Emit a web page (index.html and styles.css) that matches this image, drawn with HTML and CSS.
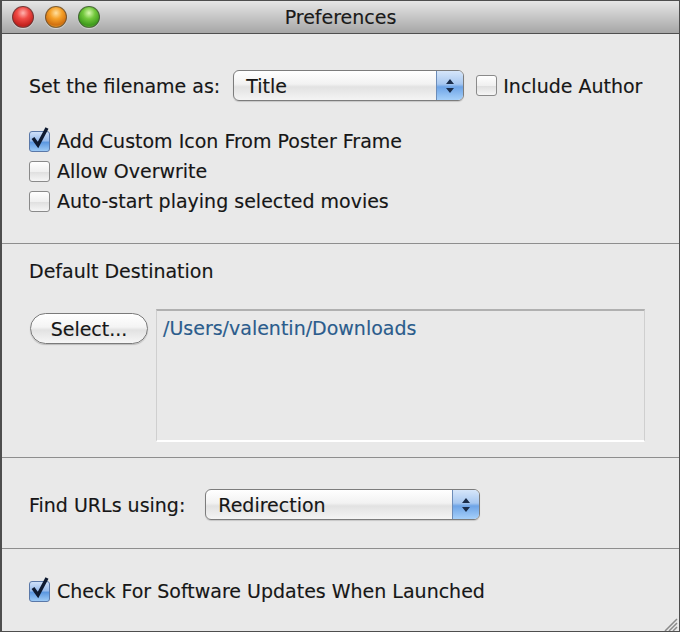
FILE: index.html
```html
<!DOCTYPE html>
<html>
<head>
<meta charset="utf-8">
<link rel="stylesheet" href="styles.css">
</head>
<body>
<div class="window">
  <div class="titlebar">
    <div class="lights">
      <span class="light red"></span>
      <span class="light orange"></span>
      <span class="light green"></span>
    </div>
    <div class="title">Preferences</div>
  </div>

  <div class="section s1">
    <div class="row name-row">
      <span class="label">Set the filename as:</span>
      <div class="popup popup-title">
        <span class="popup-text">Title</span>
        <span class="popup-arrows">
          <svg width="10" height="16" viewBox="0 0 10 16"><path d="M5 1 L9 6 L1 6 Z M5 15 L9 10 L1 10 Z" fill="#1b2d4a"/></svg>
        </span>
      </div>
      <label class="check">
        <span class="box"></span>
        <span>Include Author</span>
      </label>
    </div>
    <div class="checks">
      <label class="check">
        <span class="box checked"><svg width="22" height="24" viewBox="0 0 22 24"><path d="M4 12 L9 19 L18 2" fill="none" stroke="#0e1a30" stroke-width="3.4"/></svg></span>
        <span>Add Custom Icon From Poster Frame</span>
      </label>
      <label class="check">
        <span class="box"></span>
        <span>Allow Overwrite</span>
      </label>
      <label class="check">
        <span class="box"></span>
        <span>Auto-start playing selected movies</span>
      </label>
    </div>
  </div>

  <div class="section s2">
    <div class="label">Default Destination</div>
    <div class="dest">
      <div class="button">Select...</div>
      <div class="pathbox">/Users/valentin/Downloads</div>
    </div>
  </div>

  <div class="section s3">
    <div class="row">
      <span class="label">Find URLs using:</span>
      <div class="popup popup-redir">
        <span class="popup-text">Redirection</span>
        <span class="popup-arrows">
          <svg width="10" height="16" viewBox="0 0 10 16"><path d="M5 1 L9 6 L1 6 Z M5 15 L9 10 L1 10 Z" fill="#1b2d4a"/></svg>
        </span>
      </div>
    </div>
  </div>

  <div class="section s4">
    <label class="check">
      <span class="box checked"><svg width="22" height="24" viewBox="0 0 22 24"><path d="M4 12 L9 19 L18 2" fill="none" stroke="#0e1a30" stroke-width="3.4"/></svg></span>
      <span>Check For Software Updates When Launched</span>
    </label>
    <div class="grip">
      <svg width="16" height="16" viewBox="0 0 16 16"><path d="M15 3 L3 15 M15 7 L7 15 M15 11 L11 15" stroke="#8a8a8a" stroke-width="1.5"/></svg>
    </div>
  </div>
</div>
</body>
</html>
```

FILE: styles.css
```css
* { box-sizing: border-box; }
html, body { margin: 0; padding: 0; background: #6a6a6a; }
body {
  font-family: "DejaVu Sans", "Liberation Sans", sans-serif;
  font-size: 19px;
  color: #161616;
  -webkit-text-stroke: 0.15px #161616;
}
.window {
  width: 680px;
  height: 632px;
  background: #e9e9e9;
  border: 1px solid #4e4e4e;
  border-left-width: 2px;
  display: flex;
  flex-direction: column;
  overflow: hidden;
}
.titlebar {
  height: 33px;
  flex: none;
  position: relative;
  background: linear-gradient(#e6e6e6, #c6c6c6 50%, #a6a6a6);
  border-bottom: 1px solid #4f4f4f;
  display: flex;
  align-items: center;
  justify-content: center;
}
.lights {
  position: absolute;
  left: 10px;
  top: 5px;
  display: flex;
  gap: 11px;
}
.light {
  width: 22px;
  height: 22px;
  border-radius: 50%;
  border: 1px solid rgba(60,60,60,0.6);
  box-shadow: 0 1px 1px rgba(255,255,255,0.5);
}
.red { background: radial-gradient(circle at 50% 30%, #ffb4b0 0%, #f04a45 35%, #c0201c 75%, #e0605a 100%); }
.orange { background: radial-gradient(circle at 50% 30%, #ffe0a0 0%, #f5a028 35%, #d07010 70%, #f8d050 100%); }
.green { background: radial-gradient(circle at 50% 30%, #d8f8b0 0%, #72c83c 35%, #3e9a1c 72%, #a0e060 100%); }
.title {
  font-size: 19px;
  color: #1a1a1a;
  margin-top: -1px;
}
.section {
  flex: none;
  padding-left: 27px;
  border-bottom: 1px solid #8e8e8e;
}
.s1 { height: 210px; padding-top: 36px; }
.s2 { height: 214px; padding-top: 16px; }
.s3 { height: 91px; padding-top: 31px; }
.s4 { flex: 1; border-bottom: none; padding-top: 27px; position: relative; }

.row { display: flex; align-items: center; }
.name-row { height: 31px; }
.label { line-height: 22px; }

.popup {
  height: 31px;
  border: 1px solid #7c7c7c;
  border-radius: 6px;
  background: linear-gradient(#ffffff, #f2f2f2 45%, #e2e2e2 55%, #f4f4f4);
  display: flex;
  align-items: center;
  overflow: hidden;
  box-shadow: 0 1px 1px rgba(0,0,0,0.15);
}
.popup-title { width: 231px; margin-left: 13px; }
.popup-redir { width: 275px; margin-left: 20px; height: 31px; }
.popup-text { flex: 1; padding-left: 12px; }
.popup-arrows {
  width: 27px;
  height: 100%;
  display: flex;
  align-items: center;
  justify-content: center;
  border-left: 1px solid #6c8cb8;
  background: linear-gradient(#d6e6fa, #a8c8f0 45%, #6ea4e6 55%, #a6d0fa);
}

.check {
  display: flex;
  align-items: center;
  gap: 7px;
  height: 30px;
}
.name-row .check { margin-left: 12px; gap: 6px; }
.box {
  width: 21px;
  height: 21px;
  flex: none;
  border: 1px solid #8a8a8a;
  border-radius: 3px;
  background: linear-gradient(#ffffff, #f0f0f0 50%, #e0e0e0 55%, #f6f6f6);
  position: relative;
}
.box.checked {
  border-color: #5a78a8;
  background: linear-gradient(#cfe0f8, #98bcec 45%, #5c98e0 55%, #9ccaf6);
}
.box svg { position: absolute; left: -1px; top: -6px; }
.checks { margin-top: 25px; }

.dest {
  display: flex;
  margin-top: 27px;
  gap: 8px;
}
.button {
  width: 118px;
  height: 31px;
  margin-top: 4px;
  margin-left: 1px;
  border: 1px solid #7a7a7a;
  border-radius: 16px;
  background: linear-gradient(#ffffff, #f4f4f4 45%, #e2e2e2 55%, #f6f6f6);
  display: flex;
  align-items: center;
  justify-content: center;
  box-shadow: 0 1px 1px rgba(0,0,0,0.2);
}
.pathbox {
  width: 489px;
  height: 133px;
  border: 1px solid #cfcfcf;
  border-top: 2px solid #b0b0b0;
  border-bottom: 2px solid #ffffff;
  background: #e9e9e9;
  color: #2b5c8c;
  -webkit-text-stroke: 0.15px #2b5c8c;
  padding: 6px 0 0 6px;
}
.grip {
  position: absolute;
  right: 1px;
  bottom: 1px;
  width: 16px;
  height: 16px;
}
```
